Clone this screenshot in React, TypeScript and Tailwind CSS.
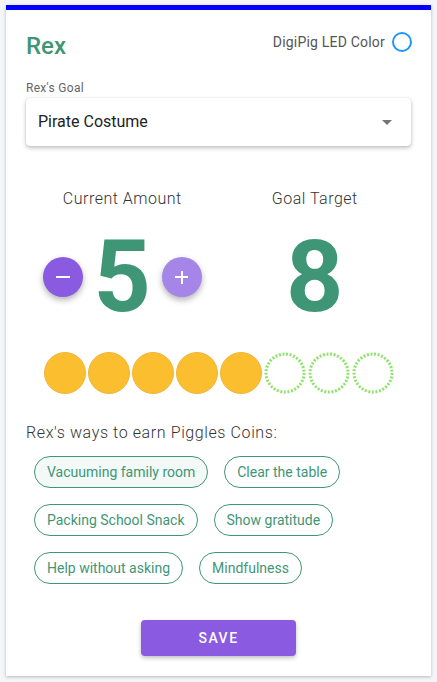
import { useState } from 'react';

const ways = [
  ['Vacuuming family room', 'Clear the table'],
  ['Packing School Snack', 'Show gratitude'],
  ['Help without asking', 'Mindfulness'],
];

const GOAL = 8;

export default function App() {
  const [amount, setAmount] = useState(5);
  const [selected] = useState('Vacuuming family room');

  return (
    <div className="min-h-screen bg-[#f4f5f7] pt-[5px] pb-[6px] px-[6px] font-['Roboto',sans-serif]">
      <div className="bg-white border-t-[5px] border-[#0000ff] shadow-[0_1px_3px_rgba(0,0,0,0.25)] px-[20px] pt-[20px] pb-[20px]">
        <div className="flex items-start justify-between">
          <h1 className="text-[24px] leading-[32px] font-medium text-[#3f9677]">Rex</h1>
          <div className="flex items-center gap-[7px] mt-[2px] mr-[-1px]">
            <span className="text-[14px] leading-[20px] text-[#555] tracking-[0.2px]">DigiPig LED Color</span>
            <span className="w-[20px] h-[20px] rounded-full border-2 border-[#2196f3]" />
          </div>
        </div>

        <div className="mt-[18px] text-[12px] leading-[16px] text-[#666] tracking-[0.3px]">Rex's Goal</div>
        <div className="mt-[2px] h-[48px] rounded-[4px] shadow-[0_2px_4px_rgba(0,0,0,0.25),0_0_1px_rgba(0,0,0,0.2)] flex items-center justify-between pl-[12px] pr-[19px]">
          <span className="text-[16px] text-[#222]">Pirate Costume</span>
          <svg width="10" height="5" viewBox="0 0 10 5">
            <path d="M0 0 L10 0 L5 5 Z" fill="#757575" />
          </svg>
        </div>

        <div className="mt-[41px] grid grid-cols-2">
          <div className="flex flex-col items-center">
            <div className="text-[16px] leading-[24px] font-light text-[#333] tracking-[0.5px]">Current Amount</div>
            <div className="mt-[16px] flex items-center">
              <button
                onClick={() => setAmount(Math.max(0, amount - 1))}
                className="w-[40px] h-[40px] rounded-full bg-[#8a5ae0] shadow-[0_3px_6px_rgba(0,0,0,0.3)] flex items-center justify-center"
              >
                <span className="block w-[14px] h-[2px] bg-white" />
              </button>
              <span className="mx-[11px] text-[100px] leading-[100px] font-bold text-[#3f9677]">{amount}</span>
              <button
                onClick={() => setAmount(Math.min(GOAL, amount + 1))}
                className="w-[40px] h-[40px] rounded-full bg-[#a585e8] shadow-[0_3px_6px_rgba(0,0,0,0.3)] flex items-center justify-center relative"
              >
                <span className="block w-[13px] h-[2px] bg-white" />
                <span className="absolute w-[2px] h-[13px] bg-white" />
              </button>
            </div>
          </div>
          <div className="flex flex-col items-center">
            <div className="text-[16px] leading-[24px] font-light text-[#333] tracking-[0.5px]">Goal Target</div>
            <div className="mt-[16px] text-[100px] leading-[100px] font-bold text-[#3f9677]">{GOAL}</div>
          </div>
        </div>

        <div className="mt-[25px] flex justify-center gap-[2px]">
          {Array.from({ length: GOAL }).map((_, i) =>
            i < amount ? (
              <span key={i} className="w-[42px] h-[42px] rounded-full bg-[#fbbe2e] border border-[#f2b53d]" />
            ) : (
              <svg key={i} width="42" height="42" viewBox="0 0 42 42">
                <circle cx="21" cy="21" r="19" fill="none" stroke="#8fe36b" strokeWidth="3" strokeDasharray="2 1.6" />
              </svg>
            )
          )}
        </div>

        <div className="mt-[27px] text-[16px] leading-[24px] font-light text-[#333] tracking-[0.6px]">Rex's ways to earn Piggles Coins:</div>
        <div className="mt-[11px] ml-[8px] flex flex-col gap-[16px]">
          {ways.map((row, r) => (
            <div key={r} className="flex gap-[16px]">
              {row.map((w) => (
                <span
                  key={w}
                  className={`h-[32px] px-[12px] rounded-full border border-[#3f9677] text-[14px] text-[#3f9677] flex items-center ${
                    w === selected ? 'bg-[#f2f9f6]' : 'bg-white'
                  }`}
                >
                  {w}
                </span>
              ))}
            </div>
          ))}
        </div>

        <div className="mt-[36px] flex justify-center">
          <button className="w-[155px] h-[36px] rounded-[4px] bg-[#8a5be0] text-white text-[14px] font-medium tracking-[1.5px] shadow-[0_2px_4px_rgba(0,0,0,0.25)]">
            SAVE
          </button>
        </div>
      </div>
    </div>
  );
}
